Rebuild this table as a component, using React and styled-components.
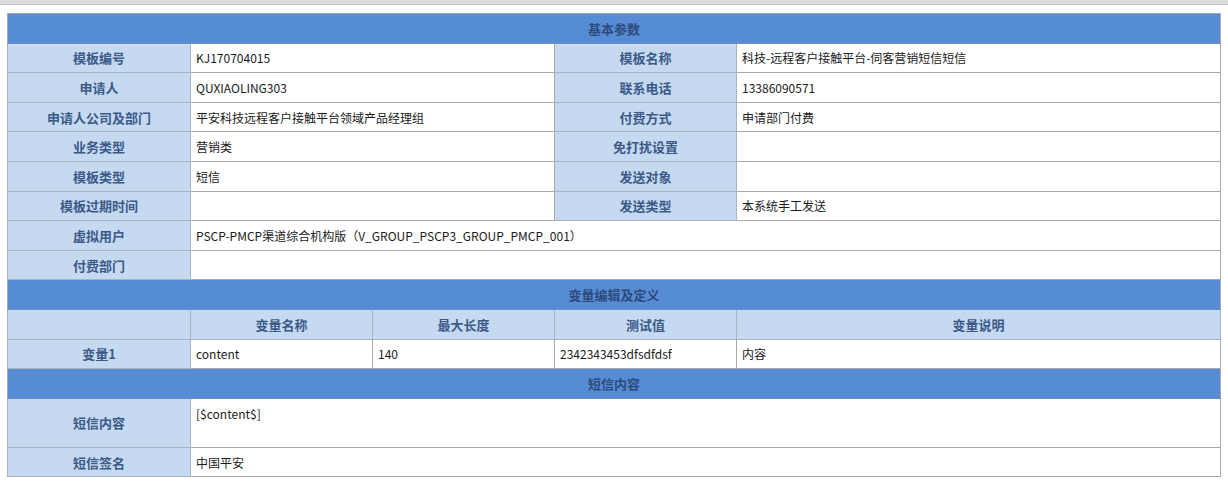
import React from 'react';
import styled, { createGlobalStyle } from 'styled-components';

const GlobalStyle = createGlobalStyle`
  html, body {
    margin: 0;
    padding: 0;
    background: #ffffff;
  }
  body {
    font-family: "Noto Sans CJK SC", "Liberation Sans", sans-serif;
  }
`;

const TopBar = styled.div`
  height: 4px;
  background: #dcdcdc;
  border-bottom: 1px solid #c4c4c4;
`;

const Page = styled.div`
  padding: 8px 7px 20px 7px;
`;

const Table = styled.table`
  width: 1214px;
  table-layout: fixed;
  border-collapse: collapse;
  border: 1px solid #a9a9a9;
`;

const Row = styled.tr`
  height: ${({ $tall }) => ($tall ? '49px' : '29.6px')};
`;

const SectionCell = styled.td`
  background: #568bd6;
  color: #2d4b7b;
  font-size: 13px;
  font-weight: 700;
  text-align: center;
  border-bottom: 1px solid #6d8fbf;
  padding: 0;
`;

const Label = styled.td`
  background: #c5d9f1;
  color: #3c5a88;
  font-size: 13px;
  font-weight: 700;
  text-align: center;
  border: 1px solid #a9b4c2;
  padding: 0;
`;

const Value = styled.td`
  background: #ffffff;
  color: #1a1a1a;
  font-size: 12px;
  text-align: left;
  vertical-align: ${({ $top }) => ($top ? 'top' : 'middle')};
  padding: ${({ $top }) => ($top ? '6px 5px 0 5px' : '0 5px')};
  border: 1px solid #a9a9a9;
  white-space: nowrap;
  overflow: hidden;
`;

const basicRows = [
  ['模板编号', 'KJ170704015', '模板名称', '科技-远程客户接触平台-伺客营销短信短信'],
  ['申请人', 'QUXIAOLING303', '联系电话', '13386090571'],
  ['申请人公司及部门', '平安科技远程客户接触平台领域产品经理组', '付费方式', '申请部门付费'],
  ['业务类型', '营销类', '免打扰设置', ''],
  ['模板类型', '短信', '发送对象', ''],
  ['模板过期时间', '', '发送类型', '本系统手工发送'],
];

const Section = ({ title }) => (
  <Row>
    <SectionCell colSpan={5}>{title}</SectionCell>
  </Row>
);

const App = () => {
  return (
    <>
      <GlobalStyle />
      <TopBar />
      <Page>
        <Table>
          <colgroup>
            <col style={{ width: 183 }} />
            <col style={{ width: 182 }} />
            <col style={{ width: 182 }} />
            <col style={{ width: 182 }} />
            <col />
          </colgroup>
          <tbody>
            <Section title="基本参数" />
            {basicRows.map(([l1, v1, l2, v2]) => (
              <Row key={l1}>
                <Label>{l1}</Label>
                <Value colSpan={2}>{v1}</Value>
                <Label>{l2}</Label>
                <Value>{v2}</Value>
              </Row>
            ))}
            <Row>
              <Label>虚拟用户</Label>
              <Value colSpan={4}>PSCP-PMCP渠道综合机构版（V_GROUP_PSCP3_GROUP_PMCP_001）</Value>
            </Row>
            <Row>
              <Label>付费部门</Label>
              <Value colSpan={4}></Value>
            </Row>
            <Section title="变量编辑及定义" />
            <Row>
              <Label></Label>
              <Label>变量名称</Label>
              <Label>最大长度</Label>
              <Label>测试值</Label>
              <Label>变量说明</Label>
            </Row>
            <Row>
              <Label>变量1</Label>
              <Value>content</Value>
              <Value>140</Value>
              <Value>2342343453dfsdfdsf</Value>
              <Value>内容</Value>
            </Row>
            <Section title="短信内容" />
            <Row $tall>
              <Label>短信内容</Label>
              <Value colSpan={4} $top>[$content$]</Value>
            </Row>
            <Row>
              <Label>短信签名</Label>
              <Value colSpan={4}>中国平安</Value>
            </Row>
          </tbody>
        </Table>
      </Page>
    </>
  );
};

export default App;
